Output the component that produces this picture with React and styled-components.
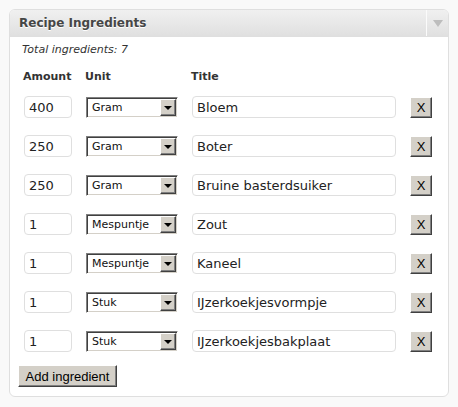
import styled, { createGlobalStyle } from "styled-components";

const ingredients = [
  { amount: "400", unit: "Gram", title: "Bloem" },
  { amount: "250", unit: "Gram", title: "Boter" },
  { amount: "250", unit: "Gram", title: "Bruine basterdsuiker" },
  { amount: "1", unit: "Mespuntje", title: "Zout" },
  { amount: "1", unit: "Mespuntje", title: "Kaneel" },
  { amount: "1", unit: "Stuk", title: "IJzerkoekjesvormpje" },
  { amount: "1", unit: "Stuk", title: "IJzerkoekjesbakplaat" },
];

const units = ["Gram", "Kilogram", "Liter", "Mespuntje", "Stuk", "Theelepel"];

const App = () => {
  return (
    <>
      <GlobalStyle />
      <Page>
        <Panel>
          <Header>
            <Title>Recipe Ingredients</Title>
            <Toggle>
              <Triangle />
            </Toggle>
          </Header>

          <Body>
            <Total>Total ingredients: {ingredients.length}</Total>

            <Labels>
              <Label>Amount</Label>
              <Label>Unit</Label>
              <Label>Title</Label>
            </Labels>

            <Rows>
              {ingredients.map((item, i) => (
                <Row key={i}>
                  <AmountInput defaultValue={item.amount} />
                  <SelectBox>
                    <UnitSelect defaultValue={item.unit}>
                      {units.map((u) => (
                        <option key={u}>{u}</option>
                      ))}
                    </UnitSelect>
                    <SelectArrow>
                      <ArrowGlyph />
                    </SelectArrow>
                  </SelectBox>
                  <TitleInput defaultValue={item.title} />
                  <RemoveButton type="button">X</RemoveButton>
                </Row>
              ))}
            </Rows>

            <AddButton type="button">Add ingredient</AddButton>
          </Body>
        </Panel>
      </Page>
    </>
  );
};

export default App;

const GlobalStyle = createGlobalStyle`
  body {
    margin: 0;
    background: #f9f9f9;
    font-family: "DejaVu Sans", Verdana, sans-serif;
    color: #333;
  }
`;

const columns = "48px 92px 204px 22px";

const Page = styled.div`
  padding: 9px;
`;

const Panel = styled.div`
  width: 440px;
  box-sizing: border-box;
  border: 1px solid #dfdfdf;
  border-radius: 6px;
  background: #fff;
  overflow: hidden;
`;

const Header = styled.div`
  display: flex;
  align-items: stretch;
  height: 26px;
  border-bottom: 1px solid #dfdfdf;
  background: linear-gradient(#f0f0f0, #e0e0e0);
`;

const Title = styled.h3`
  flex: 1;
  margin: 0;
  padding-left: 9px;
  font-size: 12px;
  font-weight: bold;
  line-height: 26px;
  color: #464646;
  text-shadow: 0 1px 0 #fff;
`;

const Toggle = styled.div`
  width: 21px;
  display: flex;
  align-items: center;
  justify-content: center;
  border-left: 1px solid #fbfbfb;
`;

const Triangle = styled.span`
  width: 0;
  height: 0;
  border-left: 5px solid transparent;
  border-right: 5px solid transparent;
  border-top: 7px solid #bdbdbd;
`;

const Body = styled.div`
  padding: 6px 8px 9px;
`;

const Total = styled.p`
  margin: 0 0 0 4px;
  font-size: 11px;
  font-style: italic;
  line-height: 14px;
`;

const Labels = styled.div`
  display: grid;
  grid-template-columns: ${columns};
  column-gap: 14px;
  margin: 13px 0 0 5px;
`;

const Label = styled.span`
  font-size: 11px;
  font-weight: bold;
  line-height: 14px;
  color: #333;
`;

const Rows = styled.div`
  display: flex;
  flex-direction: column;
  gap: 17px;
  margin: 12px 0 0 6px;
`;

const Row = styled.div`
  display: grid;
  grid-template-columns: ${columns};
  column-gap: 14px;
  align-items: center;
`;

const TextInput = styled.input`
  box-sizing: border-box;
  width: 100%;
  height: 22px;
  margin: 0;
  padding: 0 4px;
  border: 1px solid #dfdfdf;
  border-radius: 4px;
  background: #fff;
  font-family: "DejaVu Sans", Verdana, sans-serif;
  font-size: 13px;
  color: #222;
  outline: none;
`;

const AmountInput = styled(TextInput)``;

const TitleInput = styled(TextInput)``;

const SelectBox = styled.div`
  box-sizing: border-box;
  display: flex;
  height: 21px;
  border: 1px solid;
  border-color: #808080 #fff #fff #808080;
  box-shadow: inset 1px 1px #404040, inset -1px -1px #d4d0c8;
  padding: 1px;
  background: #fff;
`;

const UnitSelect = styled.select`
  flex: 1;
  min-width: 0;
  appearance: none;
  border: none;
  outline: none;
  background: transparent;
  margin: 0;
  padding: 0 0 0 4px;
  font-family: "DejaVu Sans", Verdana, sans-serif;
  font-size: 11px;
  color: #111;
`;

const SelectArrow = styled.span`
  box-sizing: border-box;
  width: 16px;
  display: flex;
  align-items: center;
  justify-content: center;
  background: #d4d0c8;
  border: 1px solid;
  border-color: #fff #404040 #404040 #fff;
  box-shadow: inset -1px -1px #808080;
`;

const ArrowGlyph = styled.span`
  width: 0;
  height: 0;
  margin: 1px 1px 0 0;
  border-left: 4px solid transparent;
  border-right: 4px solid transparent;
  border-top: 4px solid #000;
`;

const ClassicButton = styled.button`
  box-sizing: border-box;
  margin: 0;
  background: #d4d0c8;
  border: 1px solid;
  border-color: #fff #404040 #404040 #fff;
  box-shadow: inset -1px -1px #808080;
  border-radius: 0;
  font-family: "Liberation Sans", Arial, sans-serif;
  font-size: 13px;
  color: #000;
  cursor: pointer;
`;

const RemoveButton = styled(ClassicButton)`
  width: 22px;
  height: 21px;
  padding: 0;
`;

const AddButton = styled(ClassicButton)`
  display: block;
  width: 99px;
  height: 22px;
  margin-top: 13px;
  padding: 0 6px;
`;
